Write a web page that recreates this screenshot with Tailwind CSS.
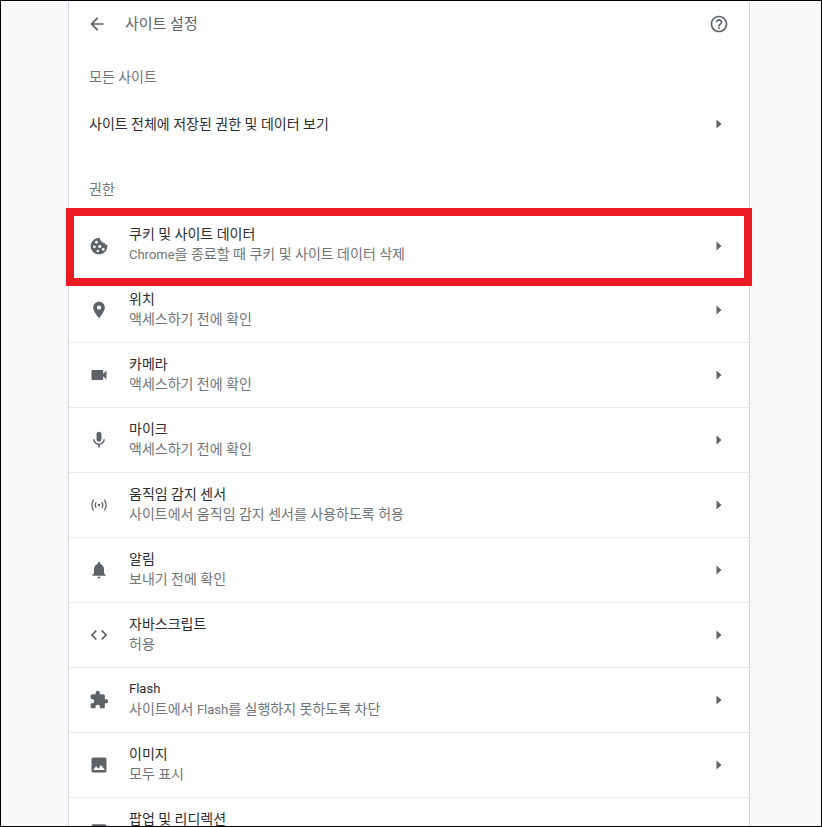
<!DOCTYPE html>
<html lang="ko">
  <head>
    <meta charset="utf-8" />
    <title>사이트 설정</title>
    <script src="https://cdn.jsdelivr.net/npm/@tailwindcss/browser@4"></script>
  </head>
  <body class="bg-white">
    <div class="relative w-[822px] h-[827px] overflow-hidden border border-black bg-[#f8f9fa] font-['Roboto','Noto_Sans_CJK_KR',sans-serif] text-[14px]">
      <main class="ml-[67px] w-[682px] h-full bg-white border-x border-[#d4d6d9]">
        <header class="flex items-center h-[46px] pl-[18px] pr-[20px] text-[#5f6368]">
          <svg class="w-5 h-5 fill-[#5f6368]" viewBox="0 0 24 24"><path d="M20 11H7.83l5.59-5.59L12 4l-8 8 8 8 1.41-1.41L7.83 13H20v-2z"/></svg>
          <h1 class="ml-[18px] flex-1 text-[15px] leading-5">사이트 설정</h1>
          <svg class="w-5 h-5 fill-[#5f6368]" viewBox="0 0 24 24"><path d="M11 18h2v-2h-2v2zm1-16C6.48 2 2 6.48 2 12s4.48 10 10 10 10-4.48 10-10S17.52 2 12 2zm0 18c-4.41 0-8-3.59-8-8s3.59-8 8-8 8 3.59 8 8-3.59 8-8 8zm0-14c-2.21 0-4 1.79-4 4h2c0-1.1.9-2 2-2s2 .9 2 2c0 2-3 1.75-3 5h2c0-2.25 3-2.5 3-5 0-2.21-1.79-4-4-4z"/></svg>
        </header>
        <h2 class="pl-5 pt-[20px] h-[53px] leading-5 text-[#70757a]">모든 사이트</h2>
        <div class="flex items-center h-[48px] pl-5 pr-[25px] text-[#2b2c2f]">
          <span class="flex-1">사이트 전체에 저장된 권한 및 데이터 보기</span>
          <svg class="w-[10px] h-[10px] fill-[#5f6368]" viewBox="0 0 10 10"><path d="M2.5 0.5L7.5 5L2.5 9.5z"/></svg>
        </div>
        <h2 class="pl-5 pt-[31px] h-[65px] leading-5 text-[#70757a]">권한</h2>

        <div class="flex items-center h-[65px] pl-5 pr-[25px]">
          <svg class="w-5 h-5 fill-[#5f6368]" viewBox="0 0 24 24"><path d="M13 2.05C7.4 1.6 2 6.4 2 12c0 5.52 4.48 10 10 10s10-4.48 10-10c0-.6-.05-1.1-.15-1.6-1.6.4-3-.6-3.3-2.2-1.7.3-3.2-.6-3.7-2.2C13.6 5.4 12.7 3.7 13 2.05z"/><g class="fill-white"><circle cx="9" cy="7.5" r="1.7"/><circle cx="6.5" cy="13" r="1.6"/><circle cx="13" cy="12.5" r="1.9"/><circle cx="10.5" cy="18" r="1.5"/><circle cx="17" cy="16" r="1.6"/></g></svg>
          <div class="ml-5 flex-1 leading-5 pb-[2px]"><div class="text-[#2b2c2f]">쿠키 및 사이트 데이터</div><div class="text-[#70757a]"><span class="text-[13px]">Chrome</span>을 종료할 때 쿠키 및 사이트 데이터 삭제</div></div>
          <svg class="w-[10px] h-[10px] fill-[#5f6368]" viewBox="0 0 10 10"><path d="M2.5 0.5L7.5 5L2.5 9.5z"/></svg>
        </div>
        <div class="flex items-center h-[65px] pl-5 pr-[25px] border-b border-[#e8eaed]">
          <svg class="w-5 h-5 fill-[#5f6368]" viewBox="0 0 24 24"><path d="M12 2C8.13 2 5 5.13 5 9c0 5.25 7 13 7 13s7-7.75 7-13c0-3.87-3.13-7-7-7zm0 9.5c-1.38 0-2.5-1.12-2.5-2.5s1.12-2.5 2.5-2.5 2.5 1.12 2.5 2.5-1.12 2.5-2.5 2.5z"/></svg>
          <div class="ml-5 flex-1 leading-5 pb-[2px]"><div class="text-[#2b2c2f]">위치</div><div class="text-[#70757a]">액세스하기 전에 확인</div></div>
          <svg class="w-[10px] h-[10px] fill-[#5f6368]" viewBox="0 0 10 10"><path d="M2.5 0.5L7.5 5L2.5 9.5z"/></svg>
        </div>
        <div class="flex items-center h-[65px] pl-5 pr-[25px] border-b border-[#e8eaed]">
          <svg class="w-5 h-5 fill-[#5f6368]" viewBox="0 0 24 24"><path d="M17 10.5V7c0-.55-.45-1-1-1H4c-.55 0-1 .45-1 1v10c0 .55.45 1 1 1h12c.55 0 1-.45 1-1v-3.5l4 4v-11l-4 4z"/></svg>
          <div class="ml-5 flex-1 leading-5 pb-[2px]"><div class="text-[#2b2c2f]">카메라</div><div class="text-[#70757a]">액세스하기 전에 확인</div></div>
          <svg class="w-[10px] h-[10px] fill-[#5f6368]" viewBox="0 0 10 10"><path d="M2.5 0.5L7.5 5L2.5 9.5z"/></svg>
        </div>
        <div class="flex items-center h-[65px] pl-5 pr-[25px] border-b border-[#e8eaed]">
          <svg class="w-5 h-5 fill-[#5f6368]" viewBox="0 0 24 24"><path d="M12 14c1.66 0 2.99-1.34 2.99-3L15 5c0-1.66-1.34-3-3-3S9 3.34 9 5v6c0 1.66 1.34 3 3 3zm5.3-3c0 3-2.54 5.1-5.3 5.1S6.7 14 6.7 11H5c0 3.41 2.72 6.23 6 6.72V21h2v-3.28c3.28-.48 6-3.3 6-6.72h-1.7z"/></svg>
          <div class="ml-5 flex-1 leading-5 pb-[2px]"><div class="text-[#2b2c2f]">마이크</div><div class="text-[#70757a]">액세스하기 전에 확인</div></div>
          <svg class="w-[10px] h-[10px] fill-[#5f6368]" viewBox="0 0 10 10"><path d="M2.5 0.5L7.5 5L2.5 9.5z"/></svg>
        </div>
        <div class="flex items-center h-[65px] pl-5 pr-[25px] border-b border-[#e8eaed]">
          <svg class="w-5 h-5 fill-none stroke-[#5f6368] stroke-[1.5]" viewBox="0 0 24 24"><circle cx="12" cy="12" r="1.6" class="fill-[#5f6368] stroke-none"/><path d="M8.8 8.5a5.5 5.5 0 0 0 0 7M15.2 8.5a5.5 5.5 0 0 1 0 7M5.8 5.5a10 10 0 0 0 0 13M18.2 5.5a10 10 0 0 1 0 13"/></svg>
          <div class="ml-5 flex-1 leading-5 pb-[2px]"><div class="text-[#2b2c2f]">움직임 감지 센서</div><div class="text-[#70757a]">사이트에서 움직임 감지 센서를 사용하도록 허용</div></div>
          <svg class="w-[10px] h-[10px] fill-[#5f6368]" viewBox="0 0 10 10"><path d="M2.5 0.5L7.5 5L2.5 9.5z"/></svg>
        </div>
        <div class="flex items-center h-[65px] pl-5 pr-[25px] border-b border-[#e8eaed]">
          <svg class="w-5 h-5 fill-[#5f6368]" viewBox="0 0 24 24"><path d="M12 22c1.1 0 2-.9 2-2h-4c0 1.1.89 2 2 2zm6-6v-5c0-3.07-1.64-5.64-4.5-6.32V4c0-.83-.67-1.5-1.5-1.5s-1.5.67-1.5 1.5v.68C7.63 5.36 6 7.92 6 11v5l-2 2v1h16v-1l-2-2z"/></svg>
          <div class="ml-5 flex-1 leading-5 pb-[2px]"><div class="text-[#2b2c2f]">알림</div><div class="text-[#70757a]">보내기 전에 확인</div></div>
          <svg class="w-[10px] h-[10px] fill-[#5f6368]" viewBox="0 0 10 10"><path d="M2.5 0.5L7.5 5L2.5 9.5z"/></svg>
        </div>
        <div class="flex items-center h-[65px] pl-5 pr-[25px] border-b border-[#e8eaed]">
          <svg class="w-5 h-5 fill-[#5f6368]" viewBox="0 0 24 24"><path d="M9.4 16.6L4.8 12l4.6-4.6L8 6l-6 6 6 6 1.4-1.4zm5.2 0l4.6-4.6-4.6-4.6L16 6l6 6-6 6-1.4-1.4z"/></svg>
          <div class="ml-5 flex-1 leading-5 pb-[2px]"><div class="text-[#2b2c2f]">자바스크립트</div><div class="text-[#70757a]">허용</div></div>
          <svg class="w-[10px] h-[10px] fill-[#5f6368]" viewBox="0 0 10 10"><path d="M2.5 0.5L7.5 5L2.5 9.5z"/></svg>
        </div>
        <div class="flex items-center h-[65px] pl-5 pr-[25px] border-b border-[#e8eaed]">
          <svg class="w-5 h-5 fill-[#5f6368]" viewBox="0 0 24 24"><path d="M20.5 11H19V7c0-1.1-.9-2-2-2h-4V3.5C13 2.12 11.88 1 10.5 1S8 2.12 8 3.5V5H4c-1.1 0-1.99.9-1.99 2v3.8H3.5c1.49 0 2.7 1.21 2.7 2.7s-1.21 2.7-2.7 2.7H2V20c0 1.1.9 2 2 2h3.8v-1.5c0-1.49 1.21-2.7 2.7-2.7 1.49 0 2.7 1.21 2.7 2.7V22H17c1.1 0 2-.9 2-2v-4h1.5c1.38 0 2.5-1.12 2.5-2.5S21.88 11 20.5 11z"/></svg>
          <div class="ml-5 flex-1 leading-5 pb-[2px]"><div class="text-[#2b2c2f] text-[13px]">Flash</div><div class="text-[#70757a]">사이트에서 <span class="text-[13px]">Flash</span>를 실행하지 못하도록 차단</div></div>
          <svg class="w-[10px] h-[10px] fill-[#5f6368]" viewBox="0 0 10 10"><path d="M2.5 0.5L7.5 5L2.5 9.5z"/></svg>
        </div>
        <div class="flex items-center h-[65px] pl-5 pr-[25px] border-b border-[#e8eaed]">
          <svg class="w-5 h-5 fill-[#5f6368]" viewBox="0 0 24 24"><path d="M21 19V5c0-1.1-.9-2-2-2H5c-1.1 0-2 .9-2 2v14c0 1.1.9 2 2 2h14c1.1 0 2-.9 2-2zM8.5 13.5l2.5 3.01L14.5 12l4.5 6H5l3.5-4.5z"/></svg>
          <div class="ml-5 flex-1 leading-5 pb-[2px]"><div class="text-[#2b2c2f]">이미지</div><div class="text-[#70757a]">모두 표시</div></div>
          <svg class="w-[10px] h-[10px] fill-[#5f6368]" viewBox="0 0 10 10"><path d="M2.5 0.5L7.5 5L2.5 9.5z"/></svg>
        </div>
        <div class="flex items-start h-[65px] pl-5 pr-[25px] pt-[11px]">
          <svg class="w-5 h-5 mt-[12px] fill-[#5f6368]" viewBox="0 0 24 24"><path d="M19 4H5c-1.11 0-2 .9-2 2v12c0 1.1.89 2 2 2h4v-2H5V8h14v10h-4v2h4c1.1 0 2-.9 2-2V6c0-1.1-.89-2-2-2zm-7 6l-4 4h3v6h2v-6h3l-4-4z"/></svg>
          <div class="ml-5 flex-1 leading-5 text-[#2b2c2f]">팝업 및 리디렉션</div>
        </div>
      </main>
      <div class="absolute left-[65px] top-[207px] w-[686px] h-[78px] border-[8px] border-[#ed1c24]"></div>
    </div>
  </body>
</html>
